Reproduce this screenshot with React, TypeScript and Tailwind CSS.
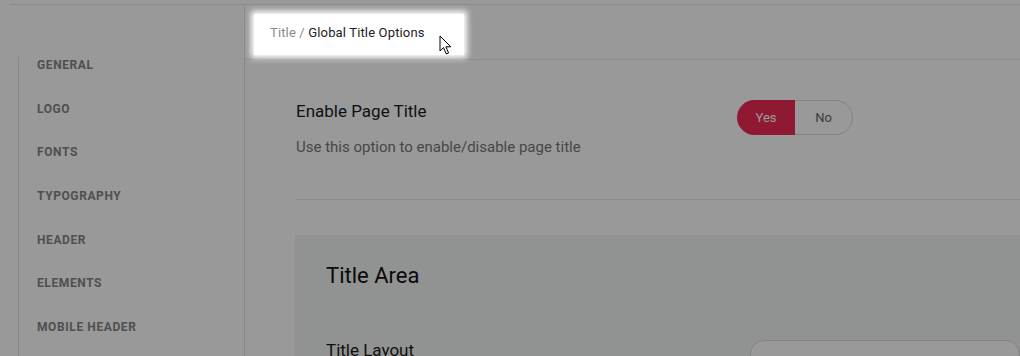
import React from "react";

const menu = ["General", "Logo", "Fonts", "Typography", "Header", "Elements", "Mobile Header"];

function Cursor() {
  return (
    <svg width="14" height="21" viewBox="0 0 14 21" className="absolute left-[439px] top-[35px] z-40">
      <path d="M1 1 L1 16 L4.5 12.6 L7.3 19 L9.6 18 L6.9 11.8 L11.8 11.8 Z" fill="white" stroke="black" strokeWidth="1" strokeLinejoin="round" />
    </svg>
  );
}

export default function App() {
  return (
    <div className="relative w-[1020px] h-[356px] overflow-hidden bg-white font-['Roboto',sans-serif] pt-[4px]">
      <div className="ml-[10px] border-t border-[#e6e6e6] flex h-full">
        <aside className="w-[235px] shrink-0 border-r border-[#e4e4e4] pl-[8px] pt-[52px]">
          <ul className="border-l border-[#e2e2e2] flex flex-col gap-[27.7px] pl-[18px] h-full">
            {menu.map((m) => (
              <li key={m} className="text-[12px] leading-[16px] font-bold uppercase tracking-[0.6px] text-[#858585]">
                {m}
              </li>
            ))}
          </ul>
        </aside>

        <main className="flex-1 min-w-0">
          <div className="h-[55px] border-b border-[#e6e6e6] flex items-center pl-[25px]">
            <div className="relative z-30 text-[13px] tracking-[0.15px] text-[#222] pt-[1px]">
              <span className="text-[#8a8a8a]">Title / </span>Global Title Options
            </div>
          </div>

          <div className="pl-[51px] pt-[40px]">
            <div className="flex">
              <div className="w-[441px] shrink-0">
                <div className="text-[17px] leading-[24px] text-[#1c1c1c] -mt-[1px]">Enable Page Title</div>
                <div className="mt-[13px] text-[15px] leading-[22px] text-[#777]">Use this option to enable/disable page title</div>
              </div>
              <div className="flex h-[35px] text-[13px]">
                <div className="w-[58px] rounded-l-full bg-[#ee2a55] text-white flex items-center justify-center">Yes</div>
                <div className="w-[58px] rounded-r-full border border-l-0 border-[#dcdcdc] text-[#666] flex items-center justify-center">No</div>
              </div>
            </div>

            <div className="mt-[41px] border-t border-[#e9e9e9]" />

            <div className="mt-[35px] -ml-px bg-[#f2f4f3] pl-[31px] pt-[26px] h-[200px]">
              <div className="text-[22px] leading-[30px] text-[#111]">Title Area</div>
              <div className="mt-[47px] flex">
                <div className="w-[424px] shrink-0 text-[17px] leading-[24px] text-[#1c1c1c]">Title Layout</div>
                <div className="mt-[2px] h-[40px] flex-1 rounded-[14px] border border-[#dadada] bg-white" />
              </div>
            </div>
          </div>
        </main>
      </div>

      <div className="absolute inset-0 z-10 bg-black/40" />
      <div className="absolute z-20 left-[254px] top-[14px] w-[210px] h-[41px] bg-white shadow-[0_0_6px_3px_#ffffff]" />
      <Cursor />
    </div>
  );
}
